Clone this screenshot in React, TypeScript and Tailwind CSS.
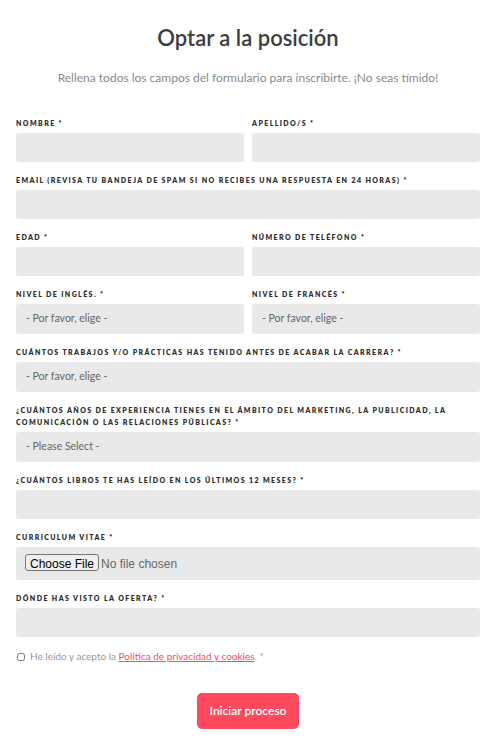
import React from 'react';

const font = { fontFamily: 'Lato, "Open Sans", sans-serif' };

const Label = ({ children }: { children: React.ReactNode }) => (
    <label className="block text-[7px] leading-[12px] font-extrabold uppercase tracking-[0.2em] text-[#2f2f2f] mb-[4px]">
        {children} *
    </label>
);

const TextBox = () => (
    <input type="text" className="block w-full h-[29px] rounded-[3px] bg-[#e9e9e9] outline-none px-3 text-[11px]" />
);

const SelectBox = ({ placeholder }: { placeholder: string }) => (
    <select className="block w-full h-[30px] rounded-[3px] bg-[#e9e9e9] outline-none appearance-none px-[10px] text-[10.5px] text-[#666]">
        <option>{placeholder}</option>
    </select>
);

const Field = ({ label, children }: { label: React.ReactNode; children: React.ReactNode }) => (
    <div className="mb-[12px]">
        <Label>{label}</Label>
        {children}
    </div>
);

export default function App() {
    return (
        <div className="min-h-screen bg-white pl-4 pr-3 pt-[24px] pb-2" style={font}>
            <h1 className="text-center text-[22px] leading-[28px] font-semibold text-[#3d3d3d]">Optar a la posición</h1>
            <p className="mt-[18px] mb-[31px] text-center text-[12px] leading-[16px] text-[#8a8a8a]">
                Rellena todos los campos del formulario para inscribirte. ¡No seas tímido!
            </p>

            <form>
                <div className="grid grid-cols-2 gap-x-2">
                    <Field label="Nombre"><TextBox /></Field>
                    <Field label="Apellido/s"><TextBox /></Field>
                </div>
                <Field label="Email (revisa tu bandeja de spam si no recibes una respuesta en 24 horas)"><TextBox /></Field>
                <div className="grid grid-cols-2 gap-x-2">
                    <Field label="Edad"><TextBox /></Field>
                    <Field label="Número de teléfono"><TextBox /></Field>
                </div>
                <div className="grid grid-cols-2 gap-x-2">
                    <Field label="Nivel de inglés."><SelectBox placeholder="- Por favor, elige -" /></Field>
                    <Field label="Nivel de francés"><SelectBox placeholder="- Por favor, elige -" /></Field>
                </div>
                <Field label="Cuántos trabajos y/o prácticas has tenido antes de acabar la carrera?"><SelectBox placeholder="- Por favor, elige -" /></Field>
                <Field label="¿Cuántos años de experiencia tienes en el ámbito del marketing, la publicidad, la comunicación o las relaciones públicas?"><SelectBox placeholder="- Please Select -" /></Field>
                <Field label="¿Cuántos libros te has leído en los últimos 12 meses?"><TextBox /></Field>
                <Field label="Curriculum vitae">
                    <div className="h-[33px] rounded-[3px] bg-[#e9e9e9] flex items-center px-[9px]">
                        <input
                            type="file"
                            className="text-[12px] text-[#666] file:mr-[2px] file:px-[4px] file:py-0 file:h-[17px] file:border file:border-solid file:border-[#767676] file:rounded-[3px] file:bg-[#efefef] file:text-black file:text-[12px]"
                            style={{ fontFamily: 'Arial, "Liberation Sans", sans-serif' }}
                        />
                    </div>
                </Field>
                <Field label="Dónde has visto la oferta?"><TextBox /></Field>

                <div className="flex items-center gap-[5px] mt-[12px] text-[10px] text-[#999]">
                    <input type="checkbox" className="w-[8px] h-[8px] m-0 ml-[1px]" />
                    <span>
                        He leído y acepto la <a href="#" className="text-[#ff4a5f] underline">Política de privacidad y cookies</a>. *
                    </span>
                </div>

                <div className="flex justify-center mt-[29px]">
                    <button type="button" className="w-[102px] h-[36px] rounded-[5px] bg-[#ff4a5f] text-white text-[12px] font-semibold">
                        Iniciar proceso
                    </button>
                </div>
            </form>
        </div>
    );
}
